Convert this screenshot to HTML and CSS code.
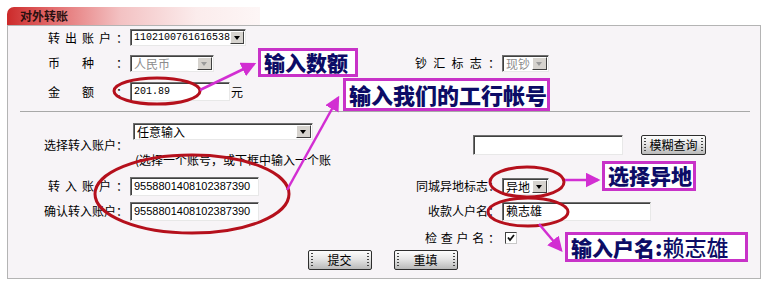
FILE: index.html
```html
<!DOCTYPE html>
<html lang="zh-CN">
<head>
  <meta charset="UTF-8">
  <title>对外转账</title>
  <link rel="stylesheet" href="styles.css">
</head>
<body>

  <div class="panel">
    <div class="tab">对外转账</div>
    <div class="box">
      <div class="form">
        <div class="lbl"><span class="j">转出账户：</span></div>
        <div class="sel w116"><span class="val mono">1102100761616538</span><i class="drop"></i></div>

        <div class="lbl"><span class="j">币种：</span></div>
        <div class="sel w84 off"><span class="val">人民币</span><i class="drop"></i></div>
        <div class="lbl r"><span class="j w85">钞汇标志：</span></div>
        <div class="sel w47 off"><span class="val">现钞</span><i class="drop"></i></div>

        <div class="lbl"><span class="j">金额：</span></div>
        <div class="cell"><div class="inp w100 mono">201.89</div><span class="unit">元</span></div>

        <div class="sep"></div>

        <div class="lbl span2">选择转入账户：</div>
        <div class="sel w180 ml5"><span class="val">任意输入</span><i class="drop"></i></div>
        <div class="search">
          <div class="inp w150 h20"></div>
          <button class="btn small">模糊查询</button>
        </div>
        <div class="hint">(选择一个账号，或下框中输入一个账</div>

        <div class="lbl"><span class="j">转入账户：</span></div>
        <div class="inp w129 num">9558801408102387390</div>
        <div class="lbl r">同城异地标志：</div>
        <div class="sel w47"><span class="val">异地</span><i class="drop"></i></div>

        <div class="lbl">确认转入账户：</div>
        <div class="inp w129 num">9558801408102387390</div>
        <div class="lbl r">收款人户名：</div>
        <div class="inp w149">赖志雄</div>

        <div class="lbl r"><span class="j w75">检查户名：</span></div>
        <div class="check">
          <svg width="10" height="10" viewBox="0 0 10 10"><path d="M2 4.5 L4 7 L8 2" fill="none" stroke="#111" stroke-width="1.8"/></svg>
        </div>

        <div class="actions">
          <button class="btn">提交</button>
          <button class="btn">重填</button>
        </div>
      </div>
    </div>
  </div>

  <!-- annotations drawn over the form -->
  <svg class="marks" width="770" height="289" viewBox="0 0 770 289">
    <defs>
      <marker id="head" markerWidth="6" markerHeight="6" refX="5" refY="3" orient="auto" markerUnits="strokeWidth">
        <path d="M0 0 L6 3 L0 6 Z" fill="#d22ed2"/>
      </marker>
    </defs>
    <g fill="none" stroke="#b5101c" stroke-width="3">
      <ellipse cx="157" cy="91" rx="43" ry="13"/>
      <ellipse cx="192" cy="194" rx="97" ry="39"/>
      <ellipse cx="527" cy="182" rx="37" ry="15"/>
      <ellipse cx="528" cy="212" rx="40" ry="14"/>
    </g>
    <g fill="none" stroke="#d22ed2" stroke-width="2.5" marker-end="url(#head)">
      <line x1="200" y1="90" x2="254" y2="64"/>
      <line x1="287" y1="190" x2="338" y2="98"/>
      <line x1="565" y1="180" x2="598" y2="180"/>
      <line x1="539" y1="224" x2="561" y2="250"/>
    </g>
  </svg>

  <div class="note n1">输入数额</div>
  <div class="note n2">输入我们的工行帐号</div>
  <div class="note n3">选择异地</div>
  <div class="note n4">输入户名:<span class="thin">赖志雄</span></div>

</body>
</html>
```

FILE: styles.css
```css
body {
  margin: 0;
  width: 770px;
  height: 289px;
  position: relative;
  overflow: hidden;
  background: #fff;
  color: #000;
  font-family: "Noto Sans CJK SC", sans-serif;
  font-size: 12px;
}

.panel {
  margin: 7px 0 0 7px;
  width: 754px;
}

.tab {
  width: 240px;
  height: 18px;
  line-height: 18px;
  padding-left: 13px;
  border-radius: 7px 0 0 0;
  background: linear-gradient(90deg, #cc2a2a 0%, #e36d6e 18%, #f3c2c3 45%, #fbecec 75%, #fdf6f6 100%);
  font-weight: bold;
  color: #2a1010;
}

.box {
  border: 1px solid #b4b4b4;
  background: #f7f4f7;
  padding-bottom: 10px;
}

.form {
  display: grid;
  grid-template-columns: 120px 272px 100px 1fr;
  grid-template-rows: 23px 28px 29px 10px 30px 28px 24px 26px 27px 17px;
  align-items: center;
}

.lbl {
  grid-column: 1;
  text-align: right;
  white-space: nowrap;
  line-height: 16px;
}

.lbl.r {
  grid-column: 3;
}

.span2 {
  grid-row: span 2;
}

.j {
  display: inline-block;
  width: 80px;
  text-align: justify;
  text-align-last: justify;
  vertical-align: top;
}

.j.w85 { width: 85px; }
.j.w75 { width: 75px; }

.sel, .inp {
  box-sizing: border-box;
  display: flex;
  align-items: center;
  margin-left: 2px;
  background: #fff;
  border: 1px solid;
  border-color: #707070 #e8e8e8 #e8e8e8 #707070;
  box-shadow: inset 1px 1px 0 #404040;
  white-space: nowrap;
}

.sel {
  height: 17px;
}

.inp {
  height: 19px;
  padding-left: 3px;
  line-height: 16px;
}

.val {
  flex: 1;
  padding-left: 3px;
  line-height: 15px;
}

.off .val {
  color: #8c8c8c;
}

.drop {
  width: 15px;
  height: 13px;
  margin-right: 1px;
  background: #d6d3ce;
  border: 1px solid;
  border-color: #fff #404040 #404040 #fff;
  box-sizing: border-box;
  position: relative;
}

.drop::after {
  content: "";
  position: absolute;
  left: 3px;
  top: 4px;
  border-left: 3.5px solid transparent;
  border-right: 3.5px solid transparent;
  border-top: 4px solid #000;
}

.off .drop::after {
  border-top-color: #9a9a9a;
}

.w47 { width: 47px; }
.w84 { width: 84px; }
.w100 { width: 100px; }
.w116 { width: 116px; }
.w129 { width: 129px; }
.w149 { width: 149px; }
.w150 { width: 150px; }
.w180 { width: 180px; }
.h20 { height: 20px; }
.ml5 { margin-left: 5px; }

.mono {
  font-family: "Liberation Mono", monospace;
  font-size: 10px;
}

.num {
  font-family: "Liberation Sans", sans-serif;
  font-size: 11px;
}

.cell {
  display: flex;
  align-items: center;
}

.unit {
  margin-left: 1px;
}

.sep {
  grid-column: 1 / -1;
  height: 1px;
  margin: 0 10px 0 12px;
  background: #a8a8a8;
}

.search {
  grid-column: 3 / span 2;
  grid-row: span 2;
  display: flex;
  align-items: center;
  padding-left: 73px;
}

.search .inp {
  margin-left: 0;
}

.hint {
  grid-column: 2;
  padding-left: 7px;
  white-space: nowrap;
  line-height: 16px;
}

.check {
  grid-column: 4;
  width: 12px;
  height: 12px;
  margin-left: 5px;
  box-sizing: border-box;
  border: 1px solid;
  border-color: #404040 #c8c8c8 #c8c8c8 #404040;
  background: #fff;
  display: flex;
}

.actions {
  grid-column: 1 / -1;
  display: flex;
  justify-content: center;
  gap: 22px;
  padding-right: 3px;
}

.btn {
  position: relative;
  box-sizing: border-box;
  width: 64px;
  height: 20px;
  padding: 0;
  border: 1px solid #2e2e2e;
  border-radius: 2px;
  background: linear-gradient(#fdfdfd 0%, #e6e6e6 45%, #b9b9b9 100%);
  font-family: "Noto Sans CJK SC", sans-serif;
  font-size: 12px;
  line-height: 16px;
  color: #000;
}

.btn::before,
.btn::after {
  content: "";
  position: absolute;
  top: 2px;
  bottom: 2px;
  width: 2px;
  background: repeating-linear-gradient(#444 0 1px, transparent 1px 3px);
}

.btn::before { left: 2px; }
.btn::after { right: 2px; }

.btn.small {
  width: 65px;
  margin-left: 18px;
}

.marks {
  position: absolute;
  left: 0;
  top: 0;
  pointer-events: none;
}

.note {
  position: absolute;
  box-sizing: border-box;
  height: 29px;
  padding: 0 3px;
  border: 3px solid #c832c8;
  background: #fff;
  color: #0c0c66;
  font-size: 21px;
  font-weight: 900;
  line-height: 22px;
  white-space: nowrap;
}

.n1 { left: 258px; top: 48px; width: 100px; }
.n2 { left: 343px; top: 78px; width: 207px; height: 33px; font-size: 22px; line-height: 26px; }
.n3 { left: 602px; top: 161px; width: 94px; height: 30px; line-height: 23px; }
.n4 { left: 565px; top: 232px; width: 183px; height: 30px; line-height: 23px; }

.n4 .thin {
  font-weight: 500;
  font-size: 22px;
}
```
